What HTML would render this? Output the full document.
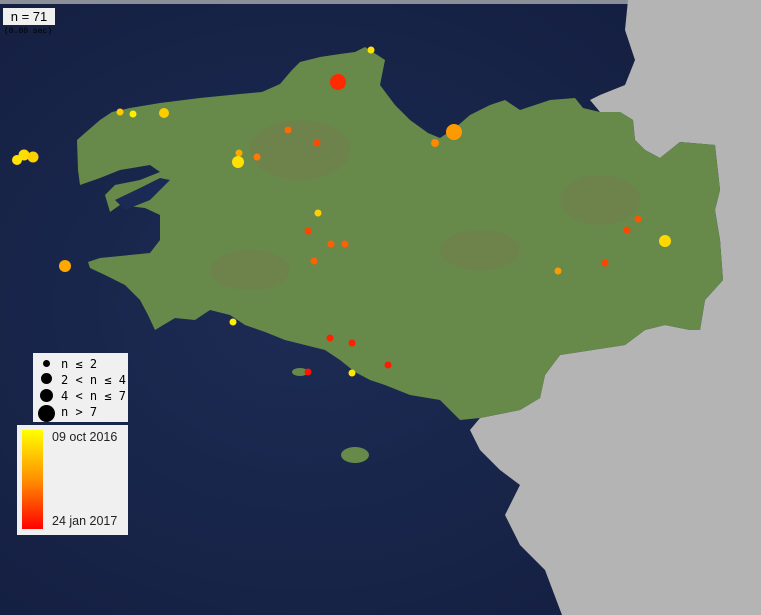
<!DOCTYPE html>
<html><head><meta charset="utf-8"><style>
body{margin:0;width:761px;height:615px;overflow:hidden;background:#172244;font-family:"Liberation Sans",sans-serif}
svg{position:absolute;left:0;top:0}
.box{position:absolute;background:#f0f0f0}
</style></head><body>
<svg width="761" height="615" viewBox="0 0 761 615">
<defs>
<radialGradient id="sea" cx="0.4" cy="0.5" r="0.8"><stop offset="0" stop-color="#1d2c55"/><stop offset="1" stop-color="#121c3c"/></radialGradient>
</defs>
<rect width="761" height="615" fill="url(#sea)"/>
<rect width="761" height="4" fill="#8a8f98"/>
<polygon fill="#b4b4b4" points="628,0 761,0 761,615 562,615 545,570 520,545 505,515 520,485 500,470 480,450 470,430 480,418 520,410 540,398 545,375 560,355 625,345 645,330 665,325 690,330 700,330 705,300 723,280 720,240 715,210 720,190 715,145 680,142 660,158 645,150 635,140 633,120 620,112 600,112 590,100 600,95 625,85 635,60 625,30"/>
<polygon fill="#678a4a" points="77,140 85,133 100,120 112,112 130,108 160,103 200,98 240,94 262,92 280,84 292,70 300,62 320,57 340,54 355,52 365,47 385,60 380,85 395,105 410,120 428,133 440,138 455,128 470,115 490,105 505,100 520,110 535,105 550,100 575,98 583,108 600,112 620,112 633,120 635,140 645,150 660,158 680,142 715,145 720,190 715,210 720,240 723,280 705,300 700,330 690,330 665,325 645,330 625,345 560,355 545,375 540,398 520,410 480,418 460,420 440,400 410,395 385,385 370,380 355,372 340,360 325,350 305,345 285,340 265,332 245,325 230,315 210,310 195,320 175,318 155,330 148,315 140,300 125,285 105,275 90,268 88,262 100,258 150,253 160,240 160,215 145,208 120,205 110,212 105,195 115,185 140,180 160,172 150,165 120,170 100,178 80,185 78,170"/>
<polygon fill="#1a2a55" points="115,200 140,188 160,178 170,180 150,200 125,210"/>
<ellipse cx="355" cy="455" rx="14" ry="8" fill="#678a4a"/>
<ellipse cx="300" cy="372" rx="8" ry="4" fill="#678a4a"/>
<g opacity="0.2" fill="#8a6a55"><ellipse cx="300" cy="150" rx="50" ry="30"/><ellipse cx="480" cy="250" rx="40" ry="20"/><ellipse cx="600" cy="200" rx="40" ry="25"/><ellipse cx="250" cy="270" rx="40" ry="20"/></g>
<g>
<circle cx="371" cy="50" r="3.5" fill="#ffe400"/>
<circle cx="338" cy="82" r="8" fill="#ff2a00"/>
<circle cx="120" cy="112" r="3.5" fill="#ffcc00"/>
<circle cx="133" cy="114" r="3.5" fill="#ffee00"/>
<circle cx="164" cy="113" r="5" fill="#ffcc00"/>
<circle cx="288" cy="130" r="3.5" fill="#ff6a00"/>
<circle cx="317" cy="143" r="3.5" fill="#ff4a00"/>
<circle cx="239" cy="153" r="3.5" fill="#ffaa00"/>
<circle cx="238" cy="162" r="6" fill="#ffe000"/>
<circle cx="257" cy="157" r="3.5" fill="#ff7a00"/>
<circle cx="24" cy="155" r="5.5" fill="#ffdd00"/>
<circle cx="17" cy="160" r="5" fill="#ffe400"/>
<circle cx="33" cy="157" r="5.5" fill="#ffd000"/>
<circle cx="454" cy="132" r="8" fill="#ff9900"/>
<circle cx="435" cy="143" r="4" fill="#ff8800"/>
<circle cx="318" cy="213" r="3.5" fill="#ffd000"/>
<circle cx="308" cy="231" r="3.5" fill="#ff4400"/>
<circle cx="331" cy="244" r="3.5" fill="#ff6000"/>
<circle cx="345" cy="244" r="3.5" fill="#ff6000"/>
<circle cx="314" cy="261" r="3.5" fill="#ff6000"/>
<circle cx="65" cy="266" r="6" fill="#ffa800"/>
<circle cx="638" cy="219" r="3.5" fill="#ff5500"/>
<circle cx="627" cy="230" r="3.5" fill="#ff4400"/>
<circle cx="665" cy="241" r="6" fill="#ffd800"/>
<circle cx="605" cy="263" r="3.5" fill="#ff4400"/>
<circle cx="558" cy="271" r="3.5" fill="#ff9900"/>
<circle cx="233" cy="322" r="3.5" fill="#ffee00"/>
<circle cx="330" cy="338" r="3.5" fill="#ff2200"/>
<circle cx="352" cy="343" r="3.5" fill="#ff2000"/>
<circle cx="388" cy="365" r="3.5" fill="#ff1a00"/>
<circle cx="308" cy="372" r="3.5" fill="#ff1500"/>
<circle cx="352" cy="373" r="3.5" fill="#ffe800"/>
</g>
</svg>
<div class="box" style="left:3px;top:8px;width:52px;height:17px;font-size:13px;line-height:17px;text-align:center;color:#000">n = 71</div>
<div style="position:absolute;left:4px;top:27px;font:8px 'Liberation Mono',monospace;color:#000">(0.00 sec)</div>
<div class="box" style="left:33px;top:353px;width:95px;height:69px;font:12px 'DejaVu Sans Mono',monospace;color:#000">
 <div style="position:absolute;left:10px;top:7px;width:7px;height:7px;border-radius:50%;background:#000"></div>
 <div style="position:absolute;left:8px;top:20px;width:11px;height:11px;border-radius:50%;background:#000"></div>
 <div style="position:absolute;left:7px;top:36px;width:13px;height:13px;border-radius:50%;background:#000"></div>
 <div style="position:absolute;left:5px;top:52px;width:17px;height:17px;border-radius:50%;background:#000"></div>
 <div style="position:absolute;left:28px;top:3px;line-height:16px">n ≤ 2<br>2 &lt; n ≤ 4<br>4 &lt; n ≤ 7<br>n &gt; 7</div>
</div>
<div class="box" style="left:17px;top:425px;width:111px;height:110px;font-size:12.5px;color:#222">
 <div style="position:absolute;left:5px;top:5px;width:21px;height:99px;background:linear-gradient(#ffff00,#ff9000 50%,#ff0000)"></div>
 <div style="position:absolute;left:35px;top:5px">09 oct 2016</div>
 <div style="position:absolute;left:35px;top:89px">24 jan 2017</div>
</div>
</body></html>
